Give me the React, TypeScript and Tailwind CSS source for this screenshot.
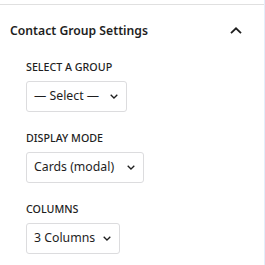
const FIELDS = [
  { label: "Select a group", value: "— Select —", width: "w-[101px]" },
  { label: "Display mode", value: "Cards (modal)", width: "w-[118px]" },
  { label: "Columns", value: "3 Columns", width: "w-[94px]" },
];

function SelectBox({ value, width }: { value: string; width: string }) {
  return (
    <div
      className={`${width} h-[31px] flex items-center justify-between pl-[7px] pr-[8px] border border-[#dcdcde] rounded-[3px] bg-white text-[12.3px] text-[#1e1e1e]`}
    >
      <span className="whitespace-nowrap">{value}</span>
      <svg width="8" height="5" viewBox="0 0 8 5" fill="none" className="shrink-0">
        <path d="M0.7 0.7 L4 4 L7.3 0.7" stroke="#1e1e1e" strokeWidth="1.3" />
      </svg>
    </div>
  );
}

export default function App() {
  return (
    <div
      className="w-[265px] h-[265px] bg-white pt-1 border-r border-[#e3eefb] overflow-hidden"
      style={{ fontFamily: '"Noto Sans", sans-serif' }}
    >
      <div className="border-t border-[#e0e0e0]">
        {/* Panel header */}
        <div className="h-[48px] flex items-center justify-between pl-[10px] pr-[22px]">
          <span className="text-[12.2px] font-semibold text-[#1e1e1e] pt-[4px]">Contact Group Settings</span>
          <svg width="12" height="7" viewBox="0 0 12 7" fill="none" className="mt-[2px]">
            <path d="M1 6.2 L6 1.3 L11 6.2" stroke="#1e1e1e" strokeWidth="1.8" />
          </svg>
        </div>

        {/* Panel body */}
        <div className="pl-[26px] flex flex-col gap-[20px] pt-[8px]">
          {FIELDS.map((f) => (
            <div key={f.label} className="flex flex-col gap-[8px]">
              <div className="text-[10.7px] font-medium uppercase text-[#1e1e1e] leading-[12px]">{f.label}</div>
              <SelectBox value={f.value} width={f.width} />
            </div>
          ))}
        </div>
      </div>
    </div>
  );
}
